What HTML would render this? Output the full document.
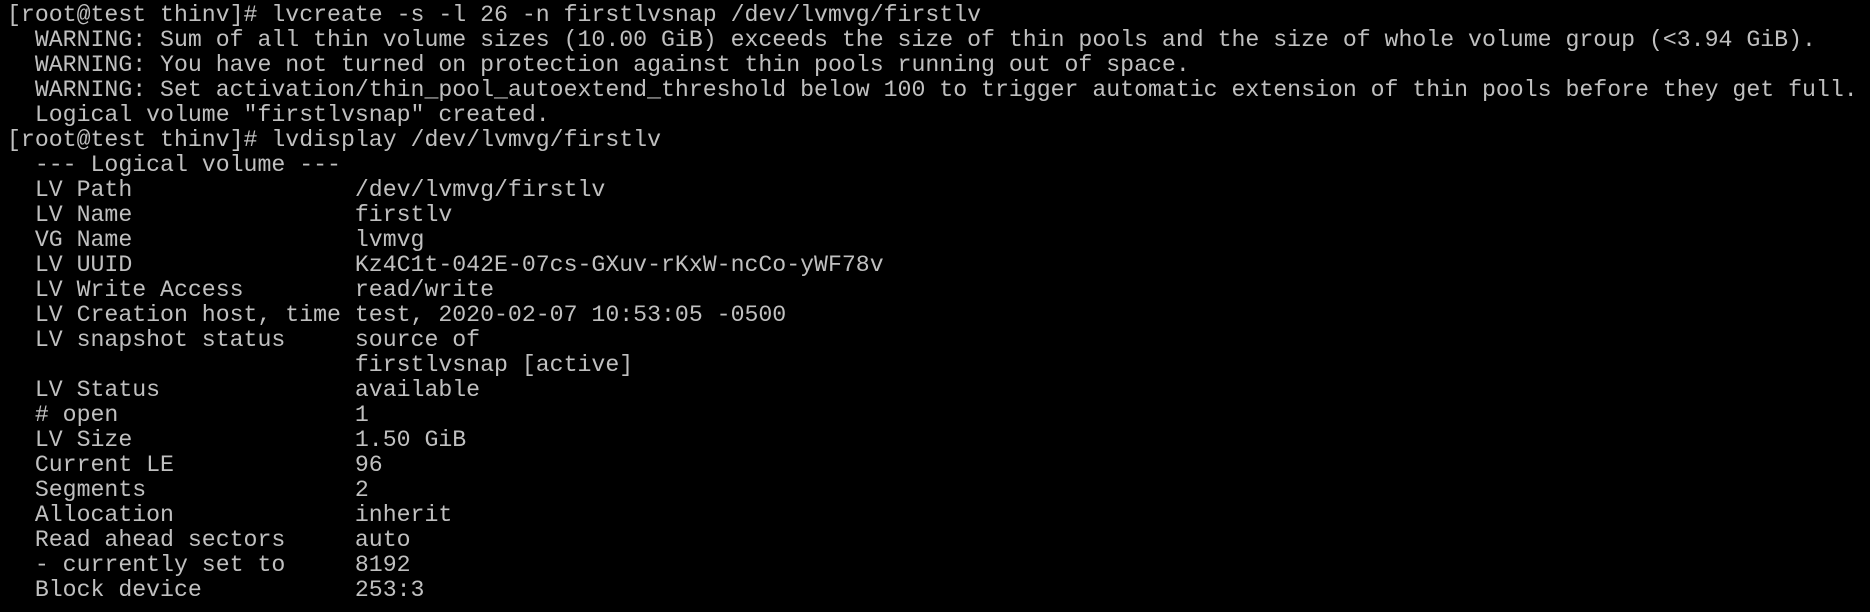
<!DOCTYPE html>
<html><head><meta charset="utf-8"><style>
html,body{margin:0;padding:0;background:#000;width:1870px;height:612px;overflow:hidden}
pre{margin:0;padding:3px 0 0 7px;font-family:"Liberation Mono",monospace;font-size:23.2px;line-height:25px;color:#c0c0c0;white-space:pre}
</style></head><body><pre>[root@test thinv]# lvcreate -s -l 26 -n firstlvsnap /dev/lvmvg/firstlv
  WARNING: Sum of all thin volume sizes (10.00 GiB) exceeds the size of thin pools and the size of whole volume group (&lt;3.94 GiB).
  WARNING: You have not turned on protection against thin pools running out of space.
  WARNING: Set activation/thin_pool_autoextend_threshold below 100 to trigger automatic extension of thin pools before they get full.
  Logical volume "firstlvsnap" created.
[root@test thinv]# lvdisplay /dev/lvmvg/firstlv
  --- Logical volume ---
  LV Path                /dev/lvmvg/firstlv
  LV Name                firstlv
  VG Name                lvmvg
  LV UUID                Kz4C1t-042E-07cs-GXuv-rKxW-ncCo-yWF78v
  LV Write Access        read/write
  LV Creation host, time test, 2020-02-07 10:53:05 -0500
  LV snapshot status     source of
                         firstlvsnap [active]
  LV Status              available
  # open                 1
  LV Size                1.50 GiB
  Current LE             96
  Segments               2
  Allocation             inherit
  Read ahead sectors     auto
  - currently set to     8192
  Block device           253:3</pre></body></html>
